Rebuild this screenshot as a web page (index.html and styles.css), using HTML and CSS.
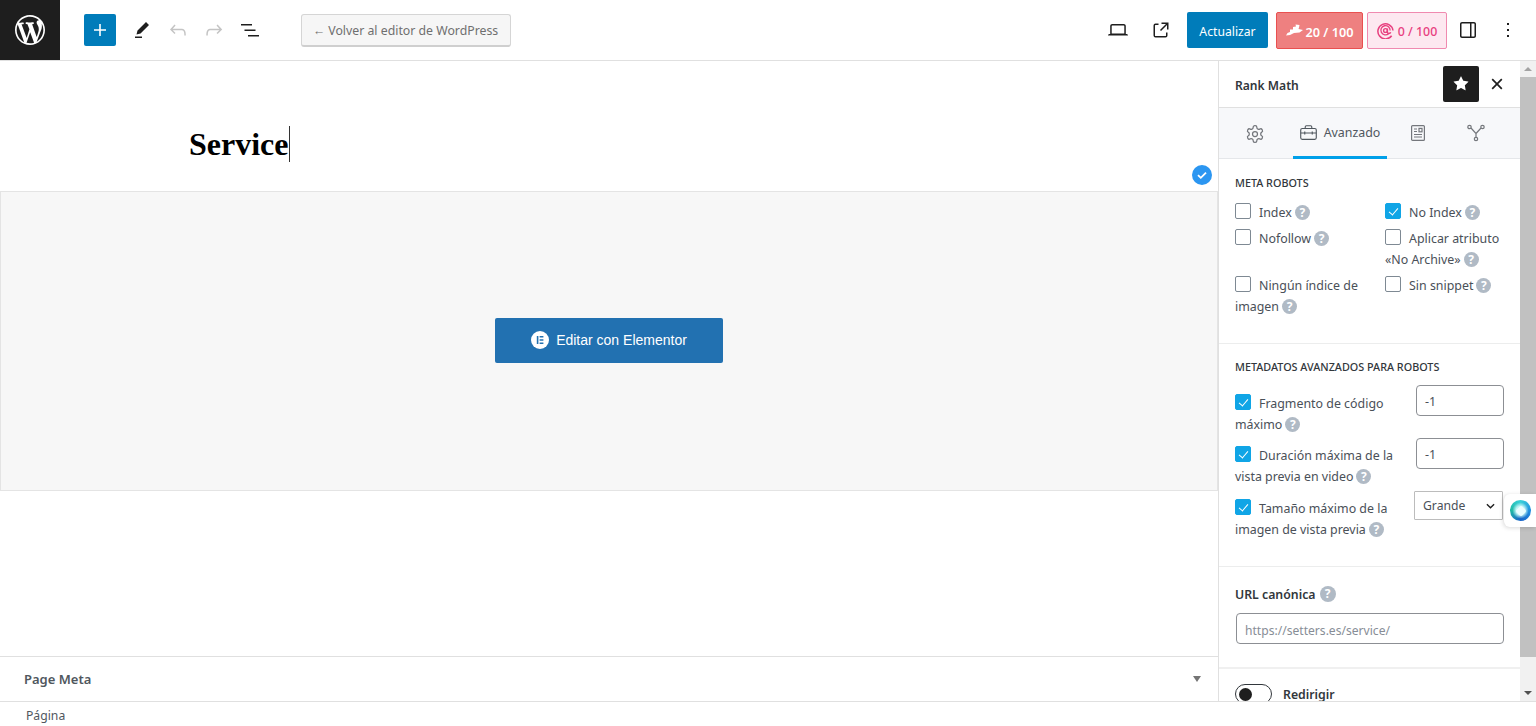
FILE: index.html
```html
<!DOCTYPE html>
<html lang="es">
<head>
<meta charset="utf-8">
<title>Service</title>
<link rel="stylesheet" href="styles.css">
</head>
<body>
<header class="topbar">
  <a class="wp-logo"><svg viewBox="0 0 20 20" width="30" height="30"><path fill="#fff" d="M20 10c0-5.51-4.49-10-10-10C4.48 0 0 4.49 0 10c0 5.52 4.48 10 10 10 5.51 0 10-4.48 10-10zM7.78 15.37L4.37 6.22c.55-.02 1.17-.08 1.17-.08.5-.06.44-1.13-.06-1.11 0 0-1.45.11-2.37.11-.18 0-.37 0-.58-.01C4.12 2.69 6.87 1.11 10 1.11c2.33 0 4.45.87 6.05 2.34-.68-.11-1.65.39-1.65 1.58 0 .74.45 1.36.9 2.1.35.61.55 1.36.55 2.46 0 1.49-1.4 5-1.4 5l-3.03-8.37c.54-.02.82-.17.82-.17.5-.05.44-1.25-.06-1.22 0 0-1.44.12-2.38.12-.87 0-2.33-.12-2.33-.12-.5-.03-.56 1.2-.06 1.22l.92.08 1.26 3.41zM17.41 10c.24-.64.74-1.87.43-4.25.7 1.29 1.05 2.71 1.05 4.25 0 3.29-1.73 6.24-4.4 7.78.97-2.59 1.94-5.2 2.92-7.78zM6.1 18.09C3.12 16.65 1.11 13.53 1.11 10c0-1.3.23-2.48.72-3.59C3.25 10.3 4.67 14.2 6.1 18.09zm4.03-6.63l2.58 6.98c-.86.29-1.76.45-2.71.45-.79 0-1.57-.11-2.29-.33.81-2.38 1.62-4.74 2.42-7.1z"/></svg></a>
  <div class="tools">
    <button class="add"><svg viewBox="0 0 24 24" width="24" height="24"><path fill="#fff" d="M18 11.2h-5.2V6h-1.6v5.2H6v1.6h5.2V18h1.6v-5.2H18z"/></svg></button>
    <span class="ico"><svg viewBox="0 0 24 24" width="24" height="24"><path d="m19 7-3-3-8.5 8.5-1 4 4-1L19 7Zm-7 11.5H5V20h7v-1.5Z"/></svg></span>
    <span class="ico off"><svg viewBox="0 0 24 24" width="24" height="24"><path d="M18.3 11.7c-.6-.6-1.4-.9-2.3-.9H6.7l2.9-3.3-1.1-1-4.5 5L8.5 16l1-1-2.7-2.7H16c.5 0 .9.2 1.3.5 1 1 1 3.4 1 4.5v.3h1.5v-.2c0-1.5 0-4.3-1.5-5.7z"/></svg></span>
    <span class="ico off"><svg viewBox="0 0 24 24" width="24" height="24"><path d="M15.6 6.5l-1.1 1 2.9 3.3H8c-.9 0-1.7.3-2.3.9-1.4 1.5-1.4 4.2-1.4 5.6v.2h1.5v-.3c0-1.1 0-3.5 1-4.5.3-.3.7-.5 1.3-.5h9.2L14.5 15l1.1 1.1 4.6-4.6-4.6-5z"/></svg></span>
    <span class="ico"><svg viewBox="0 0 24 24" width="24" height="24"><path d="M3 6h11v1.5H3V6Zm3.5 5.5h11V13h-11v-1.5ZM21 17H10v1.5h11V17Z"/></svg></span>
    <button class="back">← Volver al editor de WordPress</button>
  </div>
  <div class="actions">
    <span class="ico"><svg viewBox="0 0 24 24" width="24" height="24"><path d="M20.5 16h-.7V8c0-1.1-.9-2-2-2H6.2c-1.1 0-2 .9-2 2v8h-.7c-.8 0-1.5.7-1.5 1.5h20c0-.8-.7-1.5-1.5-1.5zM5.7 8c0-.3.2-.5.5-.5h11.6c.3 0 .5.2.5.5v7.6H5.7V8z"/></svg></span>
    <span class="ico ext"><svg viewBox="0 0 24 24" width="24" height="24"><path d="M19.5 4.5h-7V6h4.44l-5.97 5.97 1.06 1.06L18 7.06v4.44h1.5v-7Zm-13 1a2 2 0 0 0-2 2v10a2 2 0 0 0 2 2h10a2 2 0 0 0 2-2v-3H17v3a.5.5 0 0 1-.5.5h-10a.5.5 0 0 1-.5-.5v-10a.5.5 0 0 1 .5-.5h3V5.5h-3Z"/></svg></span>
    <button class="update">Actualizar</button>
    <button class="score seo"><svg viewBox="0 0 17 12" width="17" height="12"><path fill="#fff" d="M0 11.500 1.500 9 4 8V5.500h3V3l3-.5L9.500.5l4 .5-.5 2.500-.5 1.500 4.500 1-3.500 2.500-5.500.5-4 2z"/></svg><span>20 / 100</span></button>
    <button class="score ai"><svg viewBox="0 0 18 18" width="17" height="17" fill="none" stroke="#e8407f"><path stroke-width="1.600" d="M15.500 14.500A8 8 0 1 1 16.900 9"/><path stroke-width="1.400" d="M12.300 12.400A4.900 4.900 0 1 1 13.900 9"/><circle cx="9" cy="9" r="2" stroke-width="1.500"/><path stroke-width="1.500" d="M11 7v3.500c0 2.200 3 2 3.500.3"/></svg><span>0 / 100</span></button>
    <span class="ico panel"><svg viewBox="0 0 24 24" width="24" height="24"><path d="M18 4H6c-1.100 0-2 .9-2 2v12c0 1.100.9 2 2 2h12c1.100 0 2-.9 2-2V6c0-1.100-.9-2-2-2zm-4 14.500H6c-.3 0-.5-.2-.5-.5V6c0-.3.2-.5.5-.5h8v13zm4.500-.5c0 .3-.2.5-.5.5h-2.500v-13H18c.3 0 .5.2.5.5v12z"/></svg></span>
    <span class="ico more"><svg viewBox="0 0 24 24" width="24" height="24"><path d="M13 19h-2v-2h2v2zm0-6h-2v-2h2v2zm0-6h-2V5h2v2z"/></svg></span>
  </div>
</header>

<div class="workspace">
  <main class="editor">
    <div class="title-row"><h1 class="post-title">Service<span class="caret"></span></h1></div>
    <span class="saved"><svg viewBox="0 0 20 20" width="20" height="20"><circle cx="10" cy="10" r="10" fill="#2b96f1"/><path d="m6 10.200 2.800 2.600L14 7.600" fill="none" stroke="#fff" stroke-width="1.800"/></svg></span>
    <section class="builder">
      <button class="elementor"><svg viewBox="0 0 18 18" width="18" height="18"><circle cx="9" cy="9" r="9" fill="#fff"/><path fill="#2271b1" d="M5.800 5h1.600v8H5.800zM8.600 5h3.800v1.600H8.600zM8.600 8.200h3.800v1.600H8.600zM8.600 11.400h3.800V13H8.600z"/></svg>Editar con Elementor</button>
    </section>
    <div class="spacer"></div>
    <section class="meta-panel"><h2>Page Meta</h2><span class="arrow"></span></section>
  </main>

  <aside class="sidebar">
    <div class="side-head">
      <span class="side-title">Rank Math</span>
      <span class="pin"><svg viewBox="0 0 24 24" width="24" height="24"><path fill="#fff" d="M11.776 4.454a.25.25 0 01.448 0l2.069 4.192a.25.25 0 00.188.137l4.626.672a.25.25 0 01.139.426l-3.348 3.263a.25.25 0 00-.072.222l.79 4.607a.25.25 0 01-.362.263l-4.138-2.175a.25.25 0 00-.232 0l-4.138 2.175a.25.25 0 01-.363-.263l.79-4.607a.25.25 0 00-.071-.222L4.754 9.881a.25.25 0 01.139-.426l4.626-.672a.25.25 0 00.188-.137l2.069-4.192z"/></svg></span>
      <span class="close"><svg viewBox="0 0 12 12" width="12" height="12"><path d="m1.200 1.200 9.600 9.600M10.800 1.200l-9.600 9.600" fill="none" stroke="#1e1e1e" stroke-width="1.700"/></svg></span>
    </div>
    <nav class="tabs">
      <span class="tab t-gear"><svg class="line gear" viewBox="0 0 24 24" width="20" height="20"><path d="M12.220 2h-.44a2 2 0 0 0-2 2v.18a2 2 0 0 1-1 1.730l-.43.25a2 2 0 0 1-2 0l-.15-.08a2 2 0 0 0-2.730.73l-.22.38a2 2 0 0 0 .73 2.730l.15.1a2 2 0 0 1 1 1.720v.51a2 2 0 0 1-1 1.740l-.15.09a2 2 0 0 0-.73 2.730l.22.38a2 2 0 0 0 2.730.73l.15-.08a2 2 0 0 1 2 0l.43.25a2 2 0 0 1 1 1.730V20a2 2 0 0 0 2 2h.44a2 2 0 0 0 2-2v-.18a2 2 0 0 1 1-1.730l.43-.25a2 2 0 0 1 2 0l.15.08a2 2 0 0 0 2.730-.73l.22-.39a2 2 0 0 0-.73-2.730l-.15-.08a2 2 0 0 1-1-1.740v-.5a2 2 0 0 1 1-1.740l.15-.09a2 2 0 0 0 .73-2.730l-.22-.38a2 2 0 0 0-2.730-.73l-.15.08a2 2 0 0 1-2 0l-.43-.25a2 2 0 0 1-1-1.730V4a2 2 0 0 0-2-2z"/><circle cx="12" cy="12" r="3"/></svg></span>
      <span class="tab t-adv active"><svg class="line dark" viewBox="0 0 18 16" width="17" height="15"><rect x=".7" y="3.700" width="16.600" height="11.600" rx="1.600"/><path d="M5.500 3.700V2a1.200 1.200 0 0 1 1.200-1.200h4.600A1.200 1.200 0 0 1 12.500 2v1.700M.7 8.500h16.600M5 7v3M13 7v3"/></svg>Avanzado</span>
      <span class="tab t-doc"><svg class="line" viewBox="0 0 14 16" width="14" height="16"><rect x=".6" y=".6" width="12.800" height="14.800" rx="1"/><path d="M3 4h3M3 6.500h3M3 9.500h8M3 12h8"/><rect x="8" y="3.400" width="3" height="3.400"/></svg></span>
      <span class="tab t-net"><svg class="line" viewBox="0 0 18 18" width="18" height="18"><circle cx="2.500" cy="3" r="1.700"/><circle cx="15.500" cy="3" r="1.700"/><circle cx="9" cy="15" r="1.700"/><path d="M4 4 9 9.500l0 4M14 4 9 9.500"/></svg></span>
    </nav>

    <section class="group robots">
      <h3 class="caps">META ROBOTS</h3>
      <div class="check-grid">
        <label class="opt"><i class="cb"></i>Index<i class="help"></i></label>
        <label class="opt"><i class="cb on"></i>No Index<i class="help"></i></label>
        <label class="opt"><i class="cb"></i>Nofollow<i class="help"></i></label>
        <label class="opt"><i class="cb"></i>Aplicar atributo «No Archive»<i class="help"></i></label>
        <label class="opt"><i class="cb"></i>Ningún índice de imagen<i class="help"></i></label>
        <label class="opt"><i class="cb"></i>Sin snippet<i class="help"></i></label>
      </div>
    </section>

    <section class="group advanced">
      <h3 class="caps">METADATOS AVANZADOS PARA ROBOTS</h3>
      <div class="adv-row first">
        <label class="opt"><i class="cb on"></i>Fragmento de código máximo<i class="help"></i></label>
        <span class="field num">-1</span>
      </div>
      <div class="adv-row">
        <label class="opt"><i class="cb on"></i>Duración máxima de la vista previa en video<i class="help"></i></label>
        <span class="field num">-1</span>
      </div>
      <div class="adv-row">
        <label class="opt"><i class="cb on"></i>Tamaño máximo de la imagen de vista previa<i class="help"></i></label>
        <span class="field pick">Grande<svg viewBox="0 0 10 6" width="9" height="6"><path d="m1 1 4 4 4-4" fill="none" stroke="#1e1e1e" stroke-width="1.500"/></svg></span>
      </div>
    </section>

    <section class="group canonical">
      <h3 class="plain">URL canónica<i class="help big"></i></h3>
      <span class="field url">https://setters.es/service/</span>
    </section>

    <section class="redirect">
      <span class="toggle"><i></i></span><strong>Redirigir</strong>
    </section>
  </aside>

  <div class="scrollbar">
    <span class="up"></span>
    <span class="thumb"></span>
    <span class="down"></span>
  </div>

  <span class="float-widget"><i><b></b></i></span>
</div>

<footer class="crumb">Página</footer>
</body>
</html>
```
FILE: styles.css
```css
* { box-sizing: border-box; }
html, body { margin: 0; height: 100%; overflow: hidden; }
body {
  display: flex;
  flex-direction: column;
  background: #fff;
  color: #1e1e1e;
  font-family: "Noto Sans", "Open Sans", sans-serif;
  font-size: 13px;
}
button { font-family: inherit; cursor: pointer; }

.topbar {
  flex: 0 0 61px;
  display: flex;
  align-items: center;
  border-bottom: 1px solid #e0e0e0;
}
.wp-logo {
  flex: 0 0 60px;
  height: 60px;
  margin-bottom: -1px;
  align-self: flex-start;
  background: #1e1e1e;
  display: flex;
  align-items: center;
  justify-content: center;
}
.tools { display: flex; align-items: center; padding-left: 24px; }
.add {
  width: 32px; height: 32px; padding: 4px; border: 0;
  background: #007cba; border-radius: 2px; display: flex;
  margin-right: 8px;
}
.ico {
  flex: 0 0 36px; width: 36px; height: 36px;
  display: flex; align-items: center; justify-content: center;
  fill: #1e1e1e;
}
.ico.off { fill: #c4c4c4; }
.back {
  margin-left: 33px; width: 210px; height: 33px;
  background: #f6f6f6; color: #6f6f6f;
  border: 1px solid #d5d5d5; border-bottom: 2px solid #cfcfcf;
  border-radius: 3px; font-size: 12.3px; padding: 2px 1px 0 0;
  white-space: nowrap;
}
.actions { margin-left: auto; display: flex; align-items: center; padding-right: 10px; }
.ext { margin-left: 7px; margin-right: 8px; }
.update {
  width: 81px; height: 36px; border: 0; border-radius: 2px;
  background: #007cba; color: #fff; font-size: 12.2px; padding: 2px 0 0;
}
.score {
  height: 37px; border-radius: 2px; padding: 0;
  display: flex; align-items: center; justify-content: center; gap: 3px;
  font-size: 12.7px; font-weight: 600;
}
.score span { padding-top: 3px; }
.seo { width: 87px; margin-left: 8px; background: #ee8080; border: 1px solid #e95050; color: #fff; gap: 3px; }
.ai { width: 80px; margin-left: 4px; background: #fde8f0; border: 1px solid #f08ab0; color: #e8407f; font-weight: 500; font-size: 12.4px; gap: 4px; }
.panel { margin-left: 3px; margin-right: 4px; }

.workspace { flex: 1; min-height: 0; display: flex; position: relative; }
.editor {
  flex: 1; min-width: 0; display: flex; flex-direction: column; position: relative;
}
.title-row { flex: 0 0 130px; padding: 65px 0 0 189px; }
.post-title {
  margin: 0; font-family: "Liberation Serif", serif; font-size: 32px; line-height: 36px; font-weight: 700; color: #000;
  display: flex; align-items: center;
}
.caret { width: 1px; height: 36px; background: #333; }
.saved { position: absolute; top: 104px; right: 6px; display: flex; }
.builder {
  flex: 0 0 300px;
  background: #f7f7f7;
  border: 1px solid #e4e4e4;
  display: flex; align-items: center; justify-content: center;
}
.elementor {
  width: 228px; height: 45px; margin-top: -1px; border: 0; border-radius: 2px;
  background: #2271b1; color: #fff; font-family: "Liberation Sans", sans-serif; font-size: 14px;
  display: flex; align-items: center; justify-content: center; gap: 7px; padding: 0 0 2px;
}
.spacer { flex: 1; }
.meta-panel {
  flex: 0 0 45px; border-top: 1px solid #e0e0e0;
  display: flex; align-items: center; justify-content: space-between;
  padding: 0 17px 0 24px;
}
.meta-panel h2 { margin: 0; font-size: 13px; font-weight: 600; color: #50575e; }
.arrow { width: 0; height: 0; border: 4.5px solid transparent; border-top: 6px solid #757575; border-bottom: 0; }

.sidebar {
  flex: 0 0 302px; width: 302px; border-left: 1px solid #e0e0e0; overflow: hidden;
  color: #3f4650;
}
.side-head { height: 47px; border-bottom: 1px solid #e0e0e0; display: flex; align-items: center; padding: 0 5px 0 16px; }
.side-title { font-size: 12.1px; font-weight: 600; color: #32373c; padding-top: 2px; }
.pin {
  width: 36px; height: 36px; background: #1e1e1e; border-radius: 2px; margin-left: auto;
  display: flex; align-items: center; justify-content: center;
}
.close { width: 36px; height: 36px; display: flex; align-items: center; justify-content: center; }
.tabs {
  height: 51px; background: #f7f8fa; border-bottom: 1px solid #e5e7ea;
  display: flex; align-items: stretch; padding-left: 16px;
}
.tab { display: flex; align-items: center; justify-content: center; gap: 7px; font-size: 12.4px; color: #50575e; }
.t-gear { width: 40px; margin-right: 18px; padding-top: 1px; }
.t-adv { width: 94px; margin-right: 1px; border-bottom: 3px solid #00a0e9; margin-bottom: -1px; padding-top: 1px; }
.t-doc { width: 60px; }
.t-net { width: 56px; }
.line { fill: none; stroke: #74777c; stroke-width: 1.2; }
.gear { stroke-width: 1.5; }
.dark { stroke: #50575e; }

.group { padding: 0 16px; border-bottom: 1px solid #eceded; }
.caps { margin: 0; font-size: 10.8px; font-weight: 500; line-height: 16px; color: #32373c; }
.robots { height: 185px; padding-top: 16px; }
.check-grid { display: grid; grid-template-columns: 150px 1fr; margin-top: 11px; row-gap: 5px; }
.opt { display: block; font-size: 12.4px; line-height: 21px; color: #4a5058; }
.cb {
  display: inline-block; width: 16px; height: 16px; margin-right: 8px;
  border: 1px solid #7e8993; border-radius: 2px; background: #fff; vertical-align: -2px; position: relative;
}
.cb.on { background: #10a5e6; border-color: #10a5e6; }
.cb.on::after {
  content: ""; position: absolute; left: 4.5px; top: 2px; width: 4px; height: 8px;
  border: solid #fff; border-width: 0 1.4px 1.4px 0; transform: rotate(40deg);
}
.help {
  display: inline-block; width: 15px; height: 15px; margin-left: 3px; border-radius: 50%;
  background: #b0bac5; color: #fff; font-size: 12px; font-style: normal; font-weight: 700; line-height: 15px; text-align: center;
  vertical-align: 0;
}
.help::before { content: "?"; }
.help.big { width: 16px; height: 16px; line-height: 16px; margin: -2px 0 0 4px; }

.advanced { height: 223px; padding-top: 15px; }
.adv-row { display: flex; justify-content: space-between; height: 53px; }
.adv-row.first { margin-top: 10px; }
.adv-row .opt { width: 165px; padding-top: 7px; }
.adv-row.first .opt { padding-top: 8px; }
.field {
  display: flex; align-items: center; background: #fff; border: 1px solid #8c8f94; border-radius: 4px; color: #4a5058;
  font-size: 12.4px;
}
.num { flex: 0 0 88px; width: 88px; height: 31px; padding: 1px 0 0 8px; margin: 0 0 0 auto; }
.pick {
  flex: 0 0 89px; width: 89px; height: 29px; margin: 0 1px 0 auto; padding: 0 7px 0 8px; border-radius: 1px;
  border-color: #bcbcbc; justify-content: space-between; font-size: 12.2px;
}
.canonical { height: 102px; padding-top: 17px; border-bottom: 2px solid #f0f0f0; }
.plain { margin: 0 0 8px; padding-top: 1px; display: flex; align-items: center; font-size: 12.3px; line-height: 20px; font-weight: 600; color: #32373c; }
.url { margin-left: 1px; width: 268px; height: 31px; padding: 3px 0 0 8px; color: #878d96; font-size: 12.1px; }
.redirect { display: flex; align-items: center; padding: 15px 16px 0; gap: 11px; }
.redirect strong { font-size: 12.3px; font-weight: 600; color: #32373c; }
.toggle {
  width: 37px; height: 20px; border: 1px solid #32373c; border-radius: 10px; padding: 3px; display: block;
}
.toggle i { display: block; width: 13px; height: 13px; background: #1e1e1e; border-radius: 50%; }

.scrollbar { flex: 0 0 16px; width: 16px; background: #f1f1f1; display: flex; flex-direction: column; }
.up, .down { flex: 0 0 16px; display: flex; align-items: center; justify-content: center; }
.up::before { content: ""; border: 4px solid transparent; border-bottom: 4px solid #a3a3a3; border-top: 0; }
.down::before { content: ""; border: 4px solid transparent; border-top: 4px solid #505050; border-bottom: 0; }
.thumb { flex: 0 0 580px; background: #c1c1c1; }
.down { margin-top: auto; }

.float-widget {
  position: absolute; right: 0; top: 433px; width: 32px; height: 33px; background: #fff;
  border-radius: 6px 0 0 6px; box-shadow: -1px 1px 4px rgba(0,0,0,.15);
  display: flex; align-items: center; justify-content: center; padding-left: 1px;
}
.float-widget i {
  width: 21px; height: 21px; border-radius: 50%; display: flex; align-items: center; justify-content: center;
  background: radial-gradient(circle, #bff3f5 0 30%, transparent 55%), conic-gradient(#38d0d8, #1f8fe0, #1763c9, #1fb9a5, #38d0d8);
}
.float-widget b { width: 8px; height: 8px; background: #eafdff; transform: rotate(45deg); border-radius: 2px; }

.crumb {
  flex: 0 0 25px; border-top: 1px solid #e0e0e0; padding: 4px 0 0 26px; font-size: 12.2px; color: #50575e; line-height: 20px;
}
```
